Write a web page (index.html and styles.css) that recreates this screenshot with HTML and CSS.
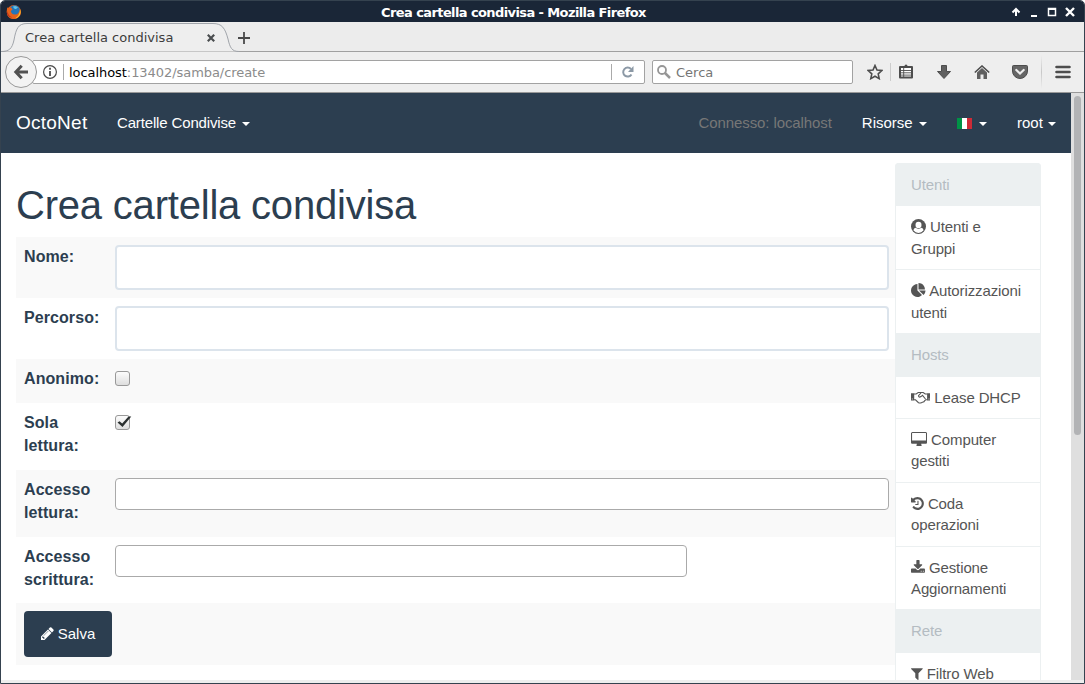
FILE: index.html
```html
<!DOCTYPE html>
<html lang="it">
<head>
    <meta charset="UTF-8">
    <title>Crea cartella condivisa</title>
    <link rel="stylesheet" href="styles.css">
</head>
<body>
<div class="window">
    <div class="titlebar">
        <svg class="firefox" width="16" height="16" viewBox="0 0 16 16">
            <circle cx="8" cy="8" r="7" fill="#e0611c"/>
            <circle cx="8.6" cy="6.6" r="5.3" fill="#2476b8"/>
            <path d="M7 2.500q3-1.500 5 1l-2 1.500q-2 .5-3-2.500z" fill="#5fc1e8"/>
            <path d="M1.200 3.500Q2.500 4 4 3.600 6 3.800 6.500 5.500L4.800 7Q5.500 10.500 9 10.500q4 0 5-5.500 1.500 4-.8 7Q11 15 8 15 3.500 15 1.500 11.500 0 7.500 1.200 3.500z" fill="#e5631b"/>
            <path d="M14 5q1.500 4-.8 7-1.700 2-4.200 2.500 3.500-2 4-4.500 1-2 1-5z" fill="#fbc52c"/>
            <path d="M1.500 7q.5 5 5 6.500Q2.500 13.500 1 10z" fill="#b8321c"/>
        </svg>
        <div class="window-title">Crea cartella condivisa - Mozilla Firefox</div>
        <svg class="window-buttons" width="66" height="12" viewBox="0 0 66 12" fill="none" stroke="#fff" stroke-width="2">
            <path d="M6 10V4M2.500 6.500L6 3l3.500 3.500"/>
            <path d="M21 10h6"/>
            <path d="M38.500 9.500v-7h7v7z" stroke-width="1.500"/><path d="M38 3h8"/>
            <path d="M56 2l8 8M64 2l-8 8" stroke-width="2.400"/>
        </svg>
    </div>

    <div class="tabs">
        <div class="tab">
            <svg class="tab-shape" width="238" height="30" viewBox="0 0 238 30">
                <path d="M0 29.500C8 29.500 11 27 13 18 15 7 17 1.500 26 1.500H212C221 1.500 224 6 227 17 229 26 231 29.500 238 29.500" fill="#eeeeee" stroke="#a0a4aa"/>
            </svg>
            <span class="tab-title">Crea cartella condivisa</span>
            <svg class="tab-close" width="8" height="8" viewBox="0 0 8 8" stroke="#4a4d4f" stroke-width="2.200">
                <path d="M.8.8l6.400 6.400M7.200.8L.8 7.200"/>
            </svg>
        </div>
        <svg class="tab-new" width="12" height="12" viewBox="0 0 12 12" stroke="#4a4a4a" stroke-width="1.800">
            <path d="M6 0v12M0 6h12"/>
        </svg>
    </div>

    <div class="toolbar">
        <div class="back">
            <svg width="16" height="16" viewBox="0 0 16 16" fill="none" stroke="#525252" stroke-width="3">
                <path d="M8.700 1.700L2.800 8l5.900 6.300M3.500 8H15"/>
            </svg>
        </div>
        <div class="urlbar">
            <svg class="info" width="14" height="14" viewBox="0 0 14 14" fill="none" stroke="#4a4a4a">
                <circle cx="7" cy="7" r="6.400" stroke-width="1.200"/>
                <path d="M7 2.800v2M7 6v5" stroke-width="1.800"/>
            </svg>
            <span class="url"><b>localhost</b>:13402/samba/create</span>
            <span class="reload">
                <svg width="12" height="12" viewBox="0 0 12 12">
                    <path d="M9.500 8.500A4.500 4.500 0 1 1 9 3" fill="none" stroke="#8c99a6" stroke-width="2"/>
                    <path d="M11.500 0v6H6z" fill="#8c99a6"/>
                </svg>
            </span>
        </div>
        <div class="search">
            <svg width="14" height="14" viewBox="0 0 14 14" fill="none" stroke="#979797">
                <circle cx="5" cy="5" r="4" stroke-width="1.800"/>
                <path d="M8 8l5 5" stroke-width="2.500"/>
            </svg>
            <span>Cerca</span>
        </div>
        <svg class="tool-star" width="16" height="16" viewBox="0 0 16 16" fill="none" stroke="#4d4d4d" stroke-width="1.600">
            <path d="M8 1.500l2 4.500 4.800.5-3.600 3.300 1 4.800L8 12.200l-4.200 2.400 1-4.800L1.200 6.500 6 6z"/>
        </svg>
        <span class="tool-line"></span>
        <svg class="tool-list" width="14" height="15" viewBox="0 0 14 15">
            <path d="M1 3h12v10.500H1z" fill="#fff" stroke="#4d4d4d" stroke-width="2" stroke-linejoin="round"/>
            <path d="M3 4V2h2.500q0-1.500 1.500-1.500T8.500 2H11v2z" fill="#4d4d4d"/>
            <path d="M2 6.500h10M2 8.800h10M2 11.100h10M4.700 4v9" stroke="#4d4d4d" stroke-width=".9"/>
        </svg>
        <svg class="tool-down" width="14" height="14" viewBox="0 0 14 14">
            <path d="M4.500.5h5v6h4L7 13.500.5 6.500h4z" fill="#606060" stroke="#4d4d4d"/>
        </svg>
        <svg class="tool-home" width="16" height="14" viewBox="0 0 16 14">
            <path d="M3 7.500L8 3l5 4.500V14H9.500V9.500h-3V14H3z" fill="#606060"/>
            <path d="M.8 7.500L8 1l7.200 6.500" fill="none" stroke="#4d4d4d" stroke-width="1.600"/>
        </svg>
        <svg class="tool-pocket" width="16" height="14" viewBox="0 0 16 14">
            <path d="M1.500.5h13q1 0 1 1v4.500a7.500 7.500 0 0 1-15 0V1.500q0-1 1-1z" fill="#666" stroke="#4d4d4d"/>
            <path d="M4.300 5L8 8.500 11.700 5" fill="none" stroke="#eee" stroke-width="2.200" stroke-linecap="round"/>
        </svg>
        <span class="tool-line tall"></span>
        <svg class="tool-menu" width="16" height="14" viewBox="0 0 16 14" stroke="#4d4d4d" stroke-width="2.600" stroke-linecap="round">
            <path d="M1.500 2h13M1.500 7h13M1.500 12h13"/>
        </svg>
    </div>

    <div class="viewport">
        <div class="page">
            <nav class="navbar">
                <a class="navbar-brand">OctoNet</a>
                <a class="nav-link nav-folders">Cartelle Condivise <i class="caret"></i></a>
                <div class="navbar-right">
                    <span class="nav-text">Connesso: localhost</span>
                    <a class="nav-link">Risorse <i class="caret"></i></a>
                    <a class="nav-link"><i class="flag-it"></i> <i class="caret"></i></a>
                    <a class="nav-link nav-user">root <i class="caret"></i></a>
                </div>
            </nav>
            <div class="content">
                <main>
                    <h1>Crea cartella condivisa</h1>
                    <table>
                        <tr>
                            <th><span class="label">Nome:</span></th>
                            <td><input class="form-control" type="text"></td>
                        </tr>
                        <tr>
                            <th><span class="label">Percorso:</span></th>
                            <td><input class="form-control" type="text"></td>
                        </tr>
                        <tr class="row-check">
                            <th><span class="label">Anonimo:</span></th>
                            <td><span class="checkbox"></span></td>
                        </tr>
                        <tr class="row-double">
                            <th><span class="label">Sola lettura:</span></th>
                            <td>
                                <span class="checkbox">
                                    <svg width="16" height="15" viewBox="0 0 16 15"><path d="M1.500 6.500l2-1.300 2.700 2.300L12.500.5h2.800L6.500 11z" fill="#2b3030"/></svg>
                                </span>
                            </td>
                        </tr>
                        <tr class="row-double">
                            <th><span class="label">Accesso lettura:</span></th>
                            <td><div class="select2"></div></td>
                        </tr>
                        <tr class="row-double last">
                            <th><span class="label">Accesso scrittura:</span></th>
                            <td><div class="select2 short"></div></td>
                        </tr>
                        <tr>
                            <td colspan="2" class="actions">
                                <button class="btn"><svg class="icon" width="12.860" height="15" viewBox="128 0 1536 1792"><path d="M491 1536l91-91-235-235-91 91v107h128v128h107zm523-928q0-22-22-22-10 0-17 7l-542 542q-7 7-7 17 0 22 22 22 10 0 17-7l542-542q7-7 7-17zm-54-192l416 416-832 832h-416v-416zm683 96q0 53-37 90l-166 166-416-416 166-165q36-38 90-38 53 0 91 38l235 234q37 39 37 91z"/></svg> Salva</button>
                            </td>
                        </tr>
                    </table>
                </main>
                <aside class="list-group">
                    <div class="list-item disabled">Utenti</div>
                    <a class="list-item"><svg class="icon" width="15" height="15" viewBox="0 0 15 15"><circle cx="7.500" cy="7.500" r="7.500"/><path d="M2.400 11.300Q2.800 9 4.600 8.700q2.900 2.300 5.800 0 1.800.3 2.200 2.600-2 2.600-5.100 2.600t-5.100-2.600z" fill="#fff"/><ellipse cx="7.500" cy="5.900" rx="3" ry="3.200" fill="#fff"/></svg> Utenti e Gruppi</a>
                    <a class="list-item"><svg class="icon" width="15" height="15" viewBox="0 0 1792 1792"><path d="M768 890l546 546q-106 108-247.500 168t-298.500 60q-209 0-385.500-103t-279.500-279.500-103-385.500 103-385.500 279.500-279.500 385.500-103v762zm187 6h773q0 157-60 298.500t-168 247.500zm709-128h-768v-768q209 0 385.500 103t279.500 279.500 103 385.500z"/></svg> Autorizzazioni utenti</a>
                    <div class="list-item disabled">Hosts</div>
                    <a class="list-item"><svg class="icon" width="19.300" height="15" viewBox="0 0 19.300 15"><path d="M0 3.300h3.200v7.200H0zM16.100 3.300h3.200v7.200h-3.200z"/><path d="M1.300 8.500v1M18 8.500v1" stroke="#fff" stroke-width=".8"/><path d="M3 4h2.200l2-1.500h5l2 1.500h2M3 9.800h1.500l3 2.900q2.500.9 4-.5 1.800-.2 2.300-1.700l1-.7h1.500M10 3L7.500 5.700q.2 2.200 2.500.9L11.500 5.300l3 3.700" fill="none" stroke="#555" stroke-width="1.100"/></svg> Lease DHCP</a>
                    <a class="list-item"><svg class="icon" width="16.070" height="15" viewBox="-64 0 1920 1792"><path d="M1728 992v-832q0-13-9.500-22.500t-22.500-9.500h-1600q-13 0-22.500 9.500t-9.500 22.500v832q0 13 9.500 22.500t22.500 9.500h1600q13 0 22.500-9.500t9.500-22.500zm128-832v1088q0 66-47 113t-113 47h-544q0 37 16 77.500t32 71 16 43.500q0 26-19 45t-45 19h-512q-26 0-45-19t-19-45q0-14 16-44t32-70 16-78h-544q-66 0-113-47t-47-113v-1088q0-66 47-113t113-47h1600q66 0 113 47t47 113z"/></svg> Computer gestiti</a>
                    <a class="list-item"><svg class="icon" width="12.860" height="15" viewBox="128 0 1536 1792"><path d="M1664 896q0 156-61 298t-164 245-245 164-298 61q-172 0-327-72.500t-264-204.500q-7-10-6.500-22.500t8.500-20.500l137-138q10-9 25-9 16 2 23 12 73 95 179 147t225 52q104 0 198.500-40.500t163.500-109.500 109.500-163.500 40.500-198.500-40.500-198.500-109.500-163.500-163.500-109.500-198.500-40.500q-98 0-188 35.500t-160 101.500l137 138q31 30 14 69-17 40-59 40h-448q-26 0-45-19t-19-45v-448q0-42 40-59 39-17 69 14l130 129q107-101 244.500-156.500t284.500-55.500q156 0 298 61t245 164 164 245 61 298zm-640-288v448q0 14-9 23t-23 9h-320q-14 0-23-9t-9-23v-64q0-14 9-23t23-9h224v-352q0-14 9-23t23-9h64q14 0 23 9t9 23z"/></svg> Coda operazioni</a>
                    <a class="list-item"><svg class="icon" width="13.930" height="15" viewBox="64 0 1664 1792"><path d="M1344 1344q0-26-19-45t-45-19-45 19-19 45 19 45 45 19 45-19 19-45zm256 0q0-26-19-45t-45-19-45 19-19 45 19 45 45 19 45-19 19-45zm128-224v320q0 40-28 68t-68 28h-1472q-40 0-68-28t-28-68v-320q0-40 28-68t68-28h465l135 136q58 56 136 56t136-56l136-136h464q40 0 68 28t28 68zm-325-569q17 41-14 70l-448 448q-18 19-45 19t-45-19l-448-448q-31-29-14-70 17-39 59-39h256v-448q0-26 19-45t45-19h256q26 0 45 19t19 45v448h256q42 0 59 39z"/></svg> Gestione Aggiornamenti</a>
                    <div class="list-item disabled">Rete</div>
                    <a class="list-item"><svg class="icon" width="11.790" height="15" viewBox="192 0 1408 1792"><path d="M1595 295q17 41-14 70l-493 493v742q0 42-39 59-13 5-25 5-27 0-45-19l-256-256q-19-19-19-45v-486l-493-493q-31-29-14-70 17-39 59-39h1280q42 0 59 39z"/></svg> Filtro Web</a>
                </aside>
            </div>
        </div>
        <div class="scrollbar"><div class="thumb"></div></div>
    </div>
</div>
</body>
</html>
```
FILE: styles.css
```css
* {
    box-sizing: border-box;
}
body {
    margin: 0;
    background: #fff;
    font-family: "Liberation Sans", Arial, sans-serif;
    font-size: 15px;
    line-height: 1.42857;
    color: #2c3e50;
    overflow: hidden;
}
svg {
    display: block;
    flex: none;
}

/* Window frame */
.window {
    display: flex;
    flex-direction: column;
    width: 1085px;
    height: 684px;
    border: 1px solid #35424f;
    border-radius: 5px 5px 0 0;
    background: #eee;
    overflow: hidden;
}
.titlebar {
    flex: none;
    display: flex;
    align-items: center;
    height: 21px;
    padding: 0 8px 0 5px;
    background: #1a2637;
    color: #fff;
    font: bold 13px/20px "DejaVu Sans", sans-serif;
}
.window-title {
    flex: 1;
    text-align: center;
    padding: 3px 5px 0 0;
    letter-spacing: -.6px;
}

/* Tabs */
.tabs {
    flex: none;
    display: flex;
    height: 30px;
    background: linear-gradient(#a0a0a0, #a0a0a0) 0 29px / 100% 1px no-repeat #ececec;
}
.tab {
    position: relative;
    display: flex;
    align-items: center;
    width: 237px;
    padding: 0 21px 0 24px;
    font: 13px/28px "DejaVu Sans", sans-serif;
    color: #3c3c3c;
}
.tab-shape {
    position: absolute;
    left: 0;
    top: 0;
}
.tab-title {
    position: relative;
    flex: 1;
    padding-top: 2px;
}
.tab-close {
    position: relative;
    margin: 2px 2px 0 0;
}
.tab-new {
    margin: 10px 0 0;
}

/* Toolbar */
.toolbar {
    flex: none;
    display: flex;
    align-items: center;
    height: 41px;
    padding: 0 13px 0 4px;
    border-bottom: 1px solid #999;
    background: #eee;
    font: 13px/22px "DejaVu Sans", sans-serif;
}
.back {
    display: flex;
    align-items: center;
    justify-content: center;
    z-index: 1;
    width: 32px;
    height: 32px;
    border: 1px solid #999;
    border-radius: 50%;
    background: #f3f3f3;
}
.urlbar, .search {
    display: flex;
    align-items: center;
    height: 24px;
    border: 1px solid #a2a2a2;
    border-radius: 2px;
    background: #fff;
    color: #8b8b8b;
}
.urlbar {
    width: 613px;
    margin-left: -5px;
    padding-left: 10px;
}
.url {
    flex: 1;
    height: 16px;
    margin-left: 6px;
    padding-left: 5px;
    border-left: 1px solid #aaa;
    line-height: 18px;
    letter-spacing: -.06px;
}
.url b {
    font-weight: normal;
    color: #000;
}
.reload {
    display: flex;
    align-items: center;
    width: 33px;
    height: 16px;
    padding-left: 10px;
    border-left: 1px solid #aaa;
}
.search {
    width: 201px;
    margin-left: 7px;
    padding-left: 4px;
    gap: 5px;
    color: #757575;
}
.search span {
    padding-top: 2px;
}
.tool-star {
    margin-left: 14px;
}
.tool-line {
    width: 1px;
    height: 18px;
    margin: 0 8px 0 7px;
    background: #ccc;
}
.tool-line.tall {
    height: 34px;
    margin: 0 13px;
    background: linear-gradient(#eee, #c8c8c8, #eee);
}
.tool-list {
    margin-bottom: 1px;
}
.tool-down {
    margin-left: 24px;
}
.tool-home {
    margin-left: 23px;
}
.tool-pocket {
    margin-left: 22px;
}

/* Page */
.viewport {
    flex: none;
    display: flex;
    height: 587px;
}
.page {
    width: 1070px;
    overflow: hidden;
    background: #fff;
}
.navbar {
    display: flex;
    align-items: center;
    height: 60px;
    padding: 0 0 0 15px;
    background: #2c3e50;
    color: #fff;
}
.navbar-brand {
    width: 86px;
    font-size: 19px;
    letter-spacing: .25px;
}
.nav-link, .nav-text {
    padding: 0 15px;
    white-space: nowrap;
}
.nav-folders {
    letter-spacing: -.15px;
}
.navbar-right {
    display: flex;
    margin-left: auto;
}
.nav-text {
    color: #777;
    letter-spacing: -.1px;
}
.caret {
    display: inline-block;
    margin-left: 2px;
    vertical-align: middle;
    border-top: 4px solid;
    border-left: 4px solid transparent;
    border-right: 4px solid transparent;
}
.navbar-right .caret {
    margin-left: 2.500px;
}
.navbar-right .nav-user .caret {
    margin-left: 1px;
}
.flag-it {
    display: inline-block;
    width: 15px;
    height: 11px;
    vertical-align: -1px;
    background: linear-gradient(90deg, #009246 33%, #fff 33%, #fff 67%, #ce2b37 67%);
}
.content {
    display: flex;
    padding-left: 15px;
}
main {
    width: 879px;
    padding-top: 31px;
}
h1 {
    margin: 0 0 10px;
    font-size: 40px;
    line-height: 43px;
    font-weight: normal;
    letter-spacing: -.2px;
}
table {
    width: 100%;
    border-collapse: collapse;
    table-layout: fixed;
}
tr {
    height: 61px;
}
tr:nth-child(odd) {
    background: #f9f9f9;
}
.row-check {
    height: 44px;
}
.row-double {
    height: 67px;
}
.row-double.last {
    height: 66px;
}
th, td {
    padding: 8px 6px 0 8px;
    vertical-align: top;
    text-align: left;
}
th {
    width: 91px;
    padding-top: 9px;
    padding-right: 0;
}
.label {
    display: block;
    font-size: 16px;
    line-height: 22.500px;
    letter-spacing: .08px;
}
.form-control {
    display: block;
    width: 100%;
    height: 45px;
    border: 2px solid #dce4ec;
    border-radius: 4px;
    background: #fff;
}
.checkbox {
    display: block;
    width: 15px;
    height: 15px;
    margin-top: 4px;
    border: 1px solid #999;
    border-radius: 3px;
    background: linear-gradient(#fcfcfc, #dedede);
}
.select2 {
    height: 32px;
    border: 1px solid #aaa;
    border-radius: 4px;
    background: #fff;
}
.select2.short {
    width: 572px;
}
.actions {
    height: 62px;
}
.btn {
    display: block;
    width: 88px;
    height: 46px;
    padding: 0;
    border: 0;
    border-radius: 4px;
    background: #2c3e50;
    color: #fff;
    font: inherit;
}
.icon {
    display: inline-block;
    vertical-align: -2px;
    fill: currentColor;
}

/* Sidebar */
.list-group {
    width: 146px;
    margin-top: 10px;
    border-radius: 4px;
    overflow: hidden;
    letter-spacing: -.12px;
}
.list-item {
    display: block;
    padding: 10px 15px;
    margin-bottom: -1px;
    border: 1px solid #ecf0f1;
    color: #555;
}
.list-item.disabled {
    background: #ecf0f1;
    color: #b4bcc2;
}

.scrollbar {
    width: 13px;
    height: 587px;
    padding: 3px 3px 0;
    background: #dfdfdf;
}
.thumb {
    height: 339px;
    border-radius: 4px;
    background: #b2b3b5;
}
```
